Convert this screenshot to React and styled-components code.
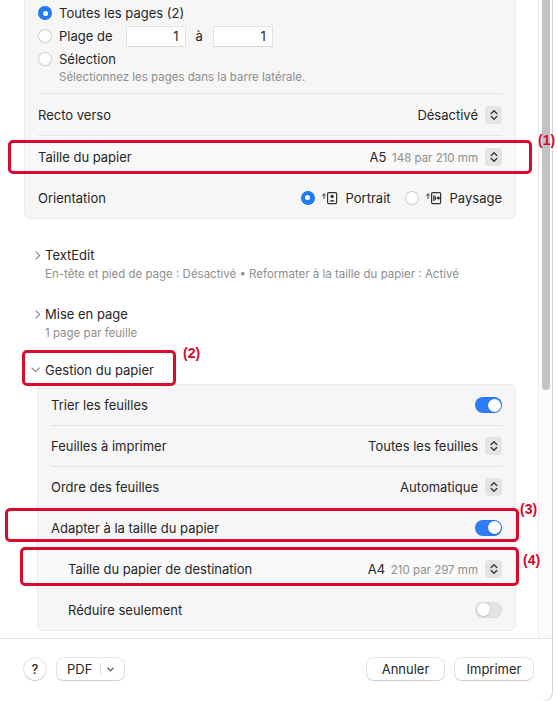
import React from "react";
import styled, { createGlobalStyle } from "styled-components";

const GlobalStyle = createGlobalStyle`
  html, body { margin: 0; padding: 0; background: #ffffff; }
  body { font-family: "Inter", "Noto Sans", "Liberation Sans", sans-serif; color: #262626; -webkit-font-smoothing: antialiased; }
  * { box-sizing: border-box; }
`;

const Stage = styled.div`
  position: relative;
  width: 557px;
  height: 701px;
  overflow: hidden;
`;

const Window = styled.div`
  width: 553px;
  height: 702px;
  background: #ffffff;
  border-right: 1px solid #d4d4d4;
  border-bottom: 1px solid #d4d4d4;
  border-bottom-right-radius: 10px;
  overflow: hidden;
`;

const ScrollArea = styled.div`
  display: flex;
  height: 638px;
  overflow: hidden;
`;

const ScrollContent = styled.div`
  flex: 1;
  margin-top: -12px;
  padding: 0 22px 0 24px;
  font-size: 13px;
`;

const ScrollTrack = styled.div`
  width: 14px;
  border-left: 1px solid #ececec;
  background: #fbfbfb;
  padding: 0 2px 0 3px;
`;

const ScrollThumb = styled.div`
  width: 8px;
  height: 400px;
  margin-top: -10px;
  border-radius: 4px;
  background: #c2c2c2;
`;

const Card = styled.div`
  margin-left: ${(p) => p.$inset || 0}px;
  margin-top: ${(p) => p.$mt || 0}px;
  background: #f6f6f6;
  border: 1px solid #ececec;
  border-radius: 6px;
`;

const RadioSection = styled.div`
  display: flex;
  flex-direction: column;
  gap: 1px;
  padding: 13px 13px 9px;
`;

const RadioRow = styled.div`
  display: flex;
  align-items: center;
  gap: 7px;
  height: 22px;
`;

const Radio = styled.span`
  flex: none;
  width: 14px;
  height: 14px;
  border-radius: 50%;
  background: ${(p) => (p.$on ? "#1f7cf6" : "#ffffff")};
  box-shadow: ${(p) =>
    p.$on
      ? "inset 0 0 0 0.5px rgba(0,0,0,0.1)"
      : "inset 0 0 0 1px #cfcfcf, 0 0.5px 1px rgba(0,0,0,0.08)"};
  display: flex;
  align-items: center;
  justify-content: center;
  &::after {
    content: "";
    width: 5px;
    height: 5px;
    border-radius: 50%;
    background: #ffffff;
    display: ${(p) => (p.$on ? "block" : "none")};
  }
`;

const NumberField = styled.span`
  width: 60px;
  height: 21px;
  background: #ffffff;
  border: 1px solid #e2e2e2;
  border-bottom-color: #d8d8d8;
  display: flex;
  align-items: center;
  justify-content: flex-end;
  padding-right: 6px;
  margin-left: ${(p) => p.$ml || 0}px;
`;

const Joiner = styled.span`
  margin-left: 3px;
`;

const Helper = styled.div`
  font-size: 11.5px;
  color: #8e8e8e;
  padding-left: 21px;
  line-height: 14px;
  margin-top: -1px;
`;

const Separator = styled.div`
  height: 1px;
  margin: 0 13px;
  background: #e4e4e4;
`;

const Row = styled.div`
  display: flex;
  align-items: center;
  justify-content: space-between;
  height: ${(p) => p.$h || 41}px;
  padding: 0 13px 0 ${(p) => (p.$indent ? 30 : 13)}px;
  background: ${(p) => (p.$hl ? "#f9f9f9" : "transparent")};
`;

const Value = styled.div`
  display: flex;
  align-items: center;
  gap: 7px;
`;

const Sub = styled.span`
  font-size: 11.5px;
  color: #8e8e8e;
  margin-left: 2px;
`;

const StepperBox = styled.span`
  width: 17px;
  height: 18px;
  border-radius: 4px;
  background: #e4e4e4;
  display: flex;
  align-items: center;
  justify-content: center;
`;

const Stepper = () => (
  <StepperBox>
    <svg width="8" height="12" viewBox="0 0 8 12">
      <path d="M1.2 4.6 L4 1.8 L6.8 4.6 M1.2 7.4 L4 10.2 L6.8 7.4" fill="none" stroke="#3a3a3a" strokeWidth="1.4" strokeLinecap="round" strokeLinejoin="round" />
    </svg>
  </StepperBox>
);

const OrientGroup = styled.div`
  display: flex;
  align-items: center;
`;

const OrientOption = styled.div`
  display: flex;
  align-items: center;
  margin-left: ${(p) => p.$ml || 0}px;
  span + svg { margin-left: 7px; }
  svg + label { margin-left: 8px; }
`;

const PortraitIcon = () => (
  <svg width="16" height="14" viewBox="0 0 16 14">
    <path d="M2 3 V7.5 M0.6 4.3 L2 2.8 L3.4 4.3" fill="none" stroke="#333" strokeWidth="1" strokeLinecap="round" />
    <rect x="5.6" y="1.6" width="9" height="11" rx="1" fill="none" stroke="#333" strokeWidth="1.2" />
    <circle cx="10.1" cy="5.4" r="1.7" fill="#333" />
    <path d="M7.3 10.6 Q10.1 6.8 12.9 10.6 Z" fill="#333" />
  </svg>
);

const LandscapeIcon = () => (
  <svg width="16" height="14" viewBox="0 0 16 14">
    <path d="M2 3 V7.5 M0.6 4.3 L2 2.8 L3.4 4.3" fill="none" stroke="#333" strokeWidth="1" strokeLinecap="round" />
    <rect x="5.6" y="1.6" width="9" height="11" rx="1" fill="none" stroke="#333" strokeWidth="1.2" />
    <path d="M7.8 4.3 V9.9" stroke="#333" strokeWidth="1.2" />
    <path d="M8.6 4.4 Q12.2 7.1 8.6 9.8 Z" fill="#333" />
    <circle cx="12.4" cy="7.1" r="1.5" fill="#333" />
  </svg>
);

const Disclosure = styled.div`
  margin-top: ${(p) => p.$mt}px;
  margin-left: 7px;
`;

const DisclosureHead = styled.div`
  display: flex;
  align-items: center;
  height: 18px;
  font-size: 13px;
`;

const ChevronSlot = styled.span`
  width: 14px;
  display: flex;
  align-items: center;
  justify-content: ${(p) => (p.$open ? "flex-start" : "center")};
`;

const DisclosureSub = styled.div`
  margin-top: 3px;
  margin-left: 14px;
  font-size: 11.5px;
  line-height: 14px;
  color: #8e8e8e;
`;

const ChevronRight = () => (
  <svg width="6" height="9" viewBox="0 0 6 9">
    <path d="M1 0.8 L4.6 4.5 L1 8.2" fill="none" stroke="#8a8a8a" strokeWidth="1.1" strokeLinecap="round" strokeLinejoin="round" />
  </svg>
);

const ChevronDown = () => (
  <svg width="9" height="6" viewBox="0 0 9 6">
    <path d="M0.8 1 L4.5 4.6 L8.2 1" fill="none" stroke="#8a8a8a" strokeWidth="1.1" strokeLinecap="round" strokeLinejoin="round" />
  </svg>
);

const ToggleTrack = styled.span`
  position: relative;
  width: 27px;
  height: 16px;
  border-radius: 8px;
  background: ${(p) => (p.$on ? "#2e7cf6" : "#e3e3e3")};
  box-shadow: inset 0 0 0 0.5px rgba(0,0,0,0.06);
  &::after {
    content: "";
    position: absolute;
    top: 1.5px;
    left: ${(p) => (p.$on ? "12.5px" : "1.5px")};
    width: 13px;
    height: 13px;
    border-radius: 50%;
    background: #ffffff;
    box-shadow: 0 0.5px 1.5px rgba(0,0,0,0.25);
  }
`;

const Footer = styled.div`
  height: 64px;
  border-top: 1px solid #e3e3e3;
  display: flex;
  align-items: flex-start;
  padding: 19px 19px 0 24px;
  font-size: 13px;
`;

const Button = styled.button`
  height: 22px;
  min-width: ${(p) => p.$w || 0}px;
  margin-left: ${(p) => p.$ml || 0}px;
  padding: 0 10px;
  border: none;
  border-radius: 6px;
  background: #ffffff;
  box-shadow: 0 0 0 0.5px rgba(0,0,0,0.18), 0 1px 1.5px rgba(0,0,0,0.12);
  font: inherit;
  font-size: 13px;
  color: #262626;
  display: flex;
  align-items: center;
  justify-content: center;
`;

const HelpButton = styled(Button)`
  width: 22px;
  min-width: 22px;
  padding: 0;
  border-radius: 50%;
  font-weight: 500;
`;

const PdfDivider = styled.span`
  width: 1px;
  height: 12px;
  background: #dcdcdc;
  margin: 0 6px 0 8px;
`;

const Spacer = styled.div`
  flex: 1;
`;

const Mark = styled.div`
  position: absolute;
  left: ${(p) => p.$x}px;
  top: ${(p) => p.$y}px;
  width: ${(p) => p.$w}px;
  height: ${(p) => p.$h}px;
  border: 3px solid #dc0a2e;
  border-radius: 5px;
  pointer-events: none;
`;

const MarkLabel = styled.div`
  position: absolute;
  left: ${(p) => p.$x}px;
  top: ${(p) => p.$y}px;
  font-family: "Liberation Sans", Arial, sans-serif;
  font-weight: 700;
  font-size: 14px;
  line-height: 14px;
  color: #d5092c;
  white-space: nowrap;
`;

export default function App() {
  return (
    <>
      <GlobalStyle />
      <Stage>
        <Window>
          <ScrollArea>
            <ScrollContent>
              <Card>
                <RadioSection>
                  <RadioRow>
                    <Radio $on />
                    <span>Toutes les pages (2)</span>
                  </RadioRow>
                  <RadioRow>
                    <Radio />
                    <span>Plage de</span>
                    <NumberField $ml={6}>1</NumberField>
                    <Joiner>à</Joiner>
                    <NumberField $ml={3}>1</NumberField>
                  </RadioRow>
                  <RadioRow>
                    <Radio />
                    <span>Sélection</span>
                  </RadioRow>
                  <Helper>Sélectionnez les pages dans la barre latérale.</Helper>
                </RadioSection>
                <Separator />
                <Row>
                  <span>Recto verso</span>
                  <Value>
                    <span>Désactivé</span>
                    <Stepper />
                  </Value>
                </Row>
                <Separator />
                <Row $hl>
                  <span>Taille du papier</span>
                  <Value>
                    <span>
                      A5 <Sub>148 par 210 mm</Sub>
                    </span>
                    <Stepper />
                  </Value>
                </Row>
                <Row>
                  <span>Orientation</span>
                  <OrientGroup>
                    <OrientOption>
                      <Radio $on />
                      <PortraitIcon />
                      <label>Portrait</label>
                    </OrientOption>
                    <OrientOption $ml={14}>
                      <Radio />
                      <LandscapeIcon />
                      <label>Paysage</label>
                    </OrientOption>
                  </OrientGroup>
                </Row>
              </Card>

              <Disclosure $mt={27}>
                <DisclosureHead>
                  <ChevronSlot><ChevronRight /></ChevronSlot>
                  <span>TextEdit</span>
                </DisclosureHead>
                <DisclosureSub>
                  En-tête et pied de page : Désactivé • Reformater à la taille du papier : Activé
                </DisclosureSub>
              </Disclosure>

              <Disclosure $mt={24}>
                <DisclosureHead>
                  <ChevronSlot><ChevronRight /></ChevronSlot>
                  <span>Mise en page</span>
                </DisclosureHead>
                <DisclosureSub>1 page par feuille</DisclosureSub>
              </Disclosure>

              <Disclosure $mt={21}>
                <DisclosureHead>
                  <ChevronSlot $open><ChevronDown /></ChevronSlot>
                  <span>Gestion du papier</span>
                </DisclosureHead>
              </Disclosure>

              <Card $inset={13} $mt={5}>
                <Row $h={40}>
                  <span>Trier les feuilles</span>
                  <ToggleTrack $on />
                </Row>
                <Separator />
                <Row $h={40}>
                  <span>Feuilles à imprimer</span>
                  <Value>
                    <span>Toutes les feuilles</span>
                    <Stepper />
                  </Value>
                </Row>
                <Separator />
                <Row $h={40}>
                  <span>Ordre des feuilles</span>
                  <Value>
                    <span>Automatique</span>
                    <Stepper />
                  </Value>
                </Row>
                <Row $h={41}>
                  <span>Adapter à la taille du papier</span>
                  <ToggleTrack $on />
                </Row>
                <Row $h={41} $indent $hl>
                  <span>Taille du papier de destination</span>
                  <Value>
                    <span>
                      A4 <Sub>210 par 297 mm</Sub>
                    </span>
                    <Stepper />
                  </Value>
                </Row>
                <Row $h={41} $indent>
                  <span>Réduire seulement</span>
                  <ToggleTrack />
                </Row>
              </Card>
            </ScrollContent>
            <ScrollTrack>
              <ScrollThumb />
            </ScrollTrack>
          </ScrollArea>

          <Footer>
            <HelpButton>?</HelpButton>
            <Button $ml={11} $w={63}>
              PDF
              <PdfDivider />
              <svg width="7" height="5" viewBox="0 0 7 5">
                <path d="M0.8 1 L3.5 3.8 L6.2 1" fill="none" stroke="#555" strokeWidth="1.1" strokeLinecap="round" strokeLinejoin="round" />
              </svg>
            </Button>
            <Spacer />
            <Button $w={77}>Annuler</Button>
            <Button $ml={11} $w={78}>Imprimer</Button>
          </Footer>
        </Window>

        <Mark $x={8} $y={140} $w={524} $h={34} />
        <MarkLabel $x={538} $y={133}>(1)</MarkLabel>
        <Mark $x={22} $y={350} $w={154} $h={36} />
        <MarkLabel $x={183} $y={346}>(2)</MarkLabel>
        <Mark $x={5} $y={508} $w={514} $h={34} />
        <MarkLabel $x={520} $y={502}>(3)</MarkLabel>
        <Mark $x={20} $y={547} $w={499} $h={39} />
        <MarkLabel $x={523} $y={553}>(4)</MarkLabel>
      </Stage>
    </>
  );
}
